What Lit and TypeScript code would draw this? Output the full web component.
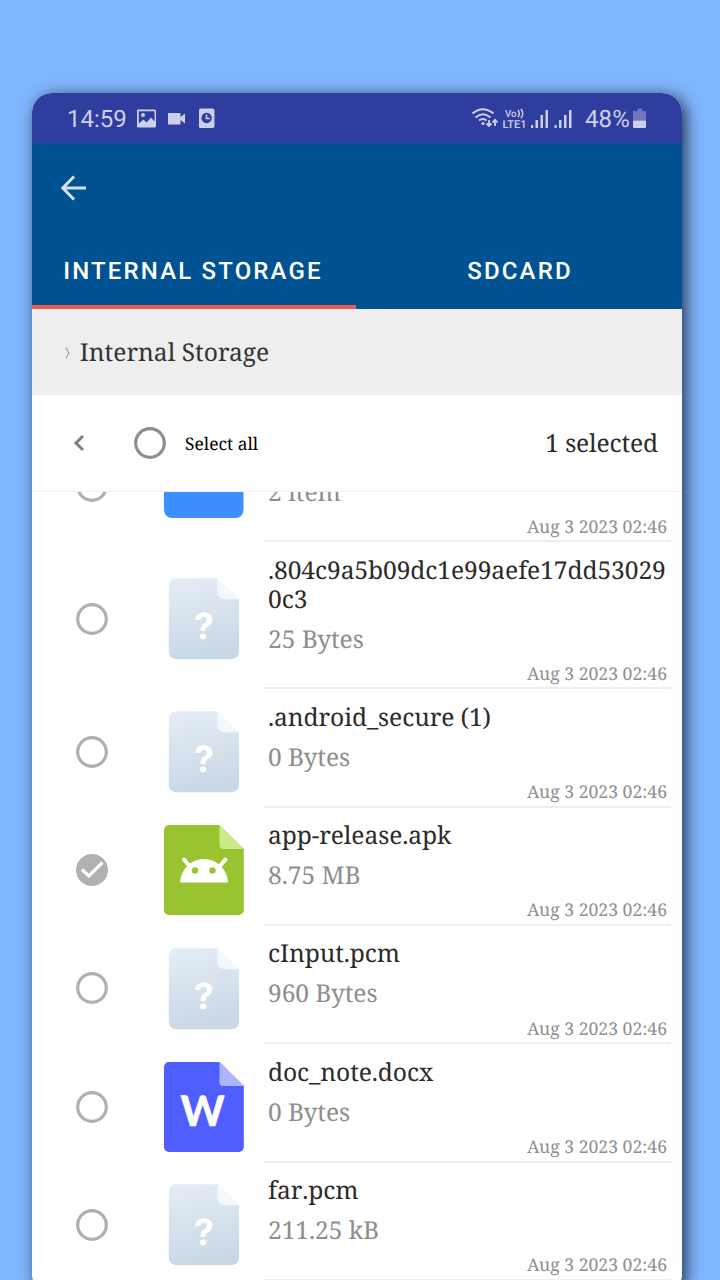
import { LitElement, html, css, svg } from "lit";
import { customElement, property } from "lit/decorators.js";

type Kind = "folder" | "unknown" | "apk" | "doc";
interface Entry { name: string; size: string; kind: Kind; checked?: boolean; }

const ENTRIES: Entry[] = [
  { name: "", size: "2 item", kind: "folder" },
  { name: ".804c9a5b09dc1e99aefe17dd530290c3", size: "25 Bytes", kind: "unknown" },
  { name: ".android_secure (1)", size: "0 Bytes", kind: "unknown" },
  { name: "app-release.apk", size: "8.75 MB", kind: "apk", checked: true },
  { name: "cInput.pcm", size: "960 Bytes", kind: "unknown" },
  { name: "doc_note.docx", size: "0 Bytes", kind: "doc" },
  { name: "far.pcm", size: "211.25 kB", kind: "unknown" },
];

@customElement("file-icon")
class FileIcon extends LitElement {
  @property() kind: Kind = "unknown";
  static styles = css`
    :host { display: block; width: 80px; height: 90px; }
    svg { display: block; }
    text { font-family: Inter, sans-serif; font-weight: 700; fill: #fff; text-anchor: middle; }
    .w { font-family: Lato, sans-serif; font-weight: 700; font-size: 42px; }
    .q { font-size: 36px; }
  `;
  render() {
    return html`<svg width="80" height="90" viewBox="0 0 80 90">${this.art()}</svg>`;
  }
  art() {
    if (this.kind === "folder") return svg`<rect y="20" width="79.5" height="56" rx="8" fill="#3d8eff"/>`;
    if (this.kind === "unknown") return svg`
      <defs><linearGradient id="g" x1="0" y1="0" x2=".2" y2="1"><stop offset="0" stop-color="#e5edf6"/><stop offset="1" stop-color="#cad8e6"/></linearGradient></defs>
      <path d="M12 4.300H53.300L75 25.500V78a7.200 7.200 0 0 1-7.200 7.200H12A7.200 7.200 0 0 1 4.800 78V11.500A7.200 7.200 0 0 1 12 4.300Z" fill="url(#g)"/>
      <path d="M53.300 4.300L75 25.200H60.500A7.200 7.200 0 0 1 53.300 18Z" fill="#f3f8fd"/>
      <text class="q" x="39.800" y="64.500">?</text>`;
    const main = this.kind === "apk" ? "#99c430" : "#505dff";
    const fold = this.kind === "apk" ? "#cbea88" : "#afb4ff";
    return svg`
      <path d="M5 0H55.500L79.800 24V85a5 5 0 0 1-5 5H5a5 5 0 0 1-5-5V5A5 5 0 0 1 5 0Z" fill=${main}/>
      <path d="M55.500 0L79.800 24H59.500a4 4 0 0 1-4-4Z" fill=${fold}/>
      ${this.kind === "apk"
        ? svg`<path d="M16 57.500C17 44 27 34 40 34S63 44 64 57.500Z" fill="#fff"/>
          <path d="M20 34.500L26 41.500M61.500 34.500L55.500 41.500" stroke="#fff" stroke-width="4" stroke-linecap="round"/>
          <circle cx="31" cy="45.500" r="3.200" fill=${main}/><circle cx="48.500" cy="45.500" r="3.200" fill=${main}/>`
        : svg`<text class="w" x="38.500" y="63.500" stroke="#fff" stroke-width=".6">W</text>`}`;
  }
}

@customElement("round-check")
class RoundCheck extends LitElement {
  @property({ type: Boolean }) checked = false;
  @property() tone = "#b0b0b0";
  static styles = css`:host { display: block; width: 32px; height: 32px; } svg { display: block; }`;
  render() {
    return html`<svg width="32" height="32" viewBox="0 0 32 32">
      ${this.checked
        ? svg`<circle cx="16" cy="16" r="16" fill=${this.tone}/><path d="M6 15.500L12.800 22L26.500 8.500" fill="none" stroke="#fff" stroke-width="3.200"/>`
        : svg`<circle cx="16" cy="16" r="14.300" fill="none" stroke=${this.tone} stroke-width="3.200"/>`}
    </svg>`;
  }
}

@customElement("file-row")
class FileRow extends LitElement {
  @property({ attribute: false }) entry!: Entry;
  static styles = css`
    :host { display: grid; grid-template-columns: 88px 100px 407px; padding-left: 44px; }
    .check, .icon { display: flex; align-items: center; padding-top: 6.4px; }
    .icon { padding-top: 7px; }
    .check { padding-left: .4px; }
    .body { box-sizing: border-box; min-height: 118.3px; border-bottom: 2px solid #eeeeee; padding: 13.5px 4px 3px; display: flex; flex-direction: column; }
    .name { font-size: 24.6px; line-height: 29.5px; min-height: 29.5px; color: #2b2b2b; word-break: break-all; letter-spacing: -.1px; font-kerning: none; }
    .size { font-size: 24.6px; line-height: 29.5px; color: #8e8e8e; margin-top: 10.5px; letter-spacing: -.07px; }
    .date { font-size: 17.6px; line-height: 20px; color: #8e8e8e; text-align: right; margin-top: 9.6px; }
  `;
  render() {
    const e = this.entry;
    return html`<div class="check"><round-check ?checked=${!!e.checked}></round-check></div>
      <div class="icon"><file-icon .kind=${e.kind}></file-icon></div>
      <div class="body"><div class="name">${e.name}</div><div class="size">${e.size}</div><div class="date">Aug 3 2023 02:46</div></div>`;
  }
}

@customElement("app-root")
class AppRoot extends LitElement {
  static styles = css`
    :host { display: block; box-sizing: border-box; width: 720px; height: 1280px; overflow: hidden; padding: 93px 38px 0 32px; background: #80b6ff; font-family: "Noto Serif", "Droid Serif", "Liberation Serif", serif; text-rendering: geometricPrecision; }
    .phone { height: 1201px; border-radius: 20px; overflow: hidden; background: #fff; display: flex; flex-direction: column; }
    .shadow { border-radius: 20px; box-shadow: 4px 3px 16px 0 rgba(0, 0, 0, .7); }
    .status { height: 50px; flex: none; box-sizing: border-box; padding: 2px 35px 0; background: #2f3d9e; color: #cdd0ea; font: 24px Roboto, sans-serif; display: flex; align-items: center; }
    .status svg { display: block; flex: none; }
    .time { width: 69px; }
    .status .icons { flex: 1; }
    .percent { margin-left: 11px; letter-spacing: .15px; }
    .battery { margin-left: 3px; }
    .bar { height: 166px; flex: none; background: #005292; color: #fff; display: flex; flex-direction: column; }
    .nav { height: 90px; box-sizing: border-box; padding: 31px 28px; }
    .nav svg { display: block; }
    .tabs { flex: 1; display: grid; grid-template-columns: 324px 326px; font: 500 24px Roboto, sans-serif; letter-spacing: 2.15px; text-align: center; }
    .tab { line-height: 77px; box-sizing: border-box; height: 76px; padding-left: 2px; }
    .active { border-bottom: 4px solid #ee5855; padding: 0 2px 0 0; }
    .crumb { height: 86px; box-sizing: border-box; padding: 1px 0 0 33px; flex: none; background: #eeeeee; display: flex; align-items: center; color: #333; font-size: 24.6px; gap: 8.700px; }
    .tools { height: 97px; flex: none; box-sizing: border-box; border-bottom: 1.5px solid #eeeeee; display: flex; align-items: center; padding: 0 24px 0 40px; }
    .all { font-size: 17.400px; color: #000; margin-left: 19px; flex: 1; padding-top: 1px; }
    .tools round-check { margin-left: 49px; }
    .count { font-size: 24.600px; letter-spacing: -.15px; color: #2b2b2b; padding-top: 1px; }
    .list { flex: 1; min-height: 0; overflow: hidden; display: flex; flex-direction: column; }
    .list file-row { flex: none; }
    .list file-row:first-child { margin-top: -68px; }
  `;
  render() {
    return html`<div class="shadow"><div class="phone">
      <div class="status">
        <span class="time">14:59</span>
        <svg class="icons" height="24" viewBox="0 0 336 24" preserveAspectRatio="xMinYMid" fill="#cdd0ea">
          <path fill-rule="evenodd" d="M2 2.500H18.500Q20 2.500 20 4V19Q20 20.500 18.500 20.500H2Q1 20.500 1 19.500V3.500Q1 2.500 2 2.500ZM2.800 4.200V16.500L7.500 12.500L10.500 15.500L15 10.500L18.500 14.500V4.200Z"/><circle cx="7" cy="8" r="2"/>
          <path d="M32 6H44.500V10L49 6.500V16.500L44.500 13V17.500H32Z"/>
          <path fill-rule="evenodd" d="M64.500 1.500H76.500Q78.500 1.500 78.500 3.500V19Q78.500 21 76.500 21H64.500Q63 21 63 19.500V3Q63 1.500 64.500 1.500ZM70.600 5.800a5.200 5.200 0 1 0 .01 0Z"/><path d="M70.500 7.500V11.500H74" fill="none" stroke="#cdd0ea" stroke-width="1.600"/>
        </svg>
        <svg width="102" height="24" viewBox="0.500 0 102 24" fill="#cdd0ea">
          <g fill="none" stroke="#cdd0ea" stroke-width="2.100"><path d="M1 6.500Q11.500-2 22 6.500M4 10.500Q11.500 4 19 10.500M7.500 13.500Q11.500 10.500 15 13.500"/><path stroke-width="1.800" d="M17.500 13V19M15 16.500L17.500 19L20 16.500M23.500 19V12.500M21 15.500L23.500 12.800L26 15.500"/></g><circle cx="11.500" cy="16.500" r="1.600"/>
          <text x="33.500" y="10" font-size="10" font-weight="500" textLength="11.500" lengthAdjust="spacingAndGlyphs">Vo</text><path d="M46.500 3Q49 6.500 46.500 10M49.500 2Q53 6.500 49.500 11" fill="none" stroke="#cdd0ea" stroke-width="1.500"/>
          <text x="31" y="20.800" font-size="11" font-weight="500" textLength="24" lengthAdjust="spacingAndGlyphs">LTE1</text>
          <path d="M59.500 18h2.200v3h-2.200zM64 13h2.500v8h-2.500zM69 8h2.500v13h-2.500zM74 3h2.500v18h-2.500zM83 18h2.200v3h-2.200zM87.500 13h2.500v8h-2.500zM92.500 8h2.500v13h-2.500zM97.500 3h2.500v18h-2.500z"/>
        </svg>
        <span class="percent">48%</span>
        <svg class="battery" width="14" height="24" viewBox="0 0 14 24"><path d="M0 4H4.500V1.500H9V4H13V13.500H0Z" fill="#6e77bb"/><path d="M0 13.500H13V20Q13 21 12 21H1Q0 21 0 20Z" fill="#cdd0ea"/></svg>
      </div>
      <div class="bar">
        <div class="nav"><svg width="28" height="28" viewBox="0 0 28 28" fill="none" stroke="#d2e2ee" stroke-width="3"><path d="M14 2.500L2.800 14L14 25.500M3 14H26"/></svg></div>
        <div class="tabs"><div class="tab active">INTERNAL STORAGE</div><div class="tab">SDCARD</div></div>
      </div>
      <div class="crumb"><svg width="6" height="12" viewBox="0 0 6 12" fill="none" stroke="#888" stroke-width="1"><path d="M1 .5Q2 3 4 6Q2 9 1 11.500"/></svg><span>Internal Storage</span></div>
      <div class="tools">
        <svg width="13" height="18" viewBox="0 0 13 18" fill="none" stroke="#808080" stroke-width="3"><path d="M11 2L4 9L11 16"/></svg>
        <round-check tone="#8e8e8e"></round-check><span class="all">Select all</span><span class="count">1 selected</span>
      </div>
      <div class="list">${ENTRIES.map((e) => html`<file-row .entry=${e}></file-row>`)}</div>
    </div></div>`;
  }
}
